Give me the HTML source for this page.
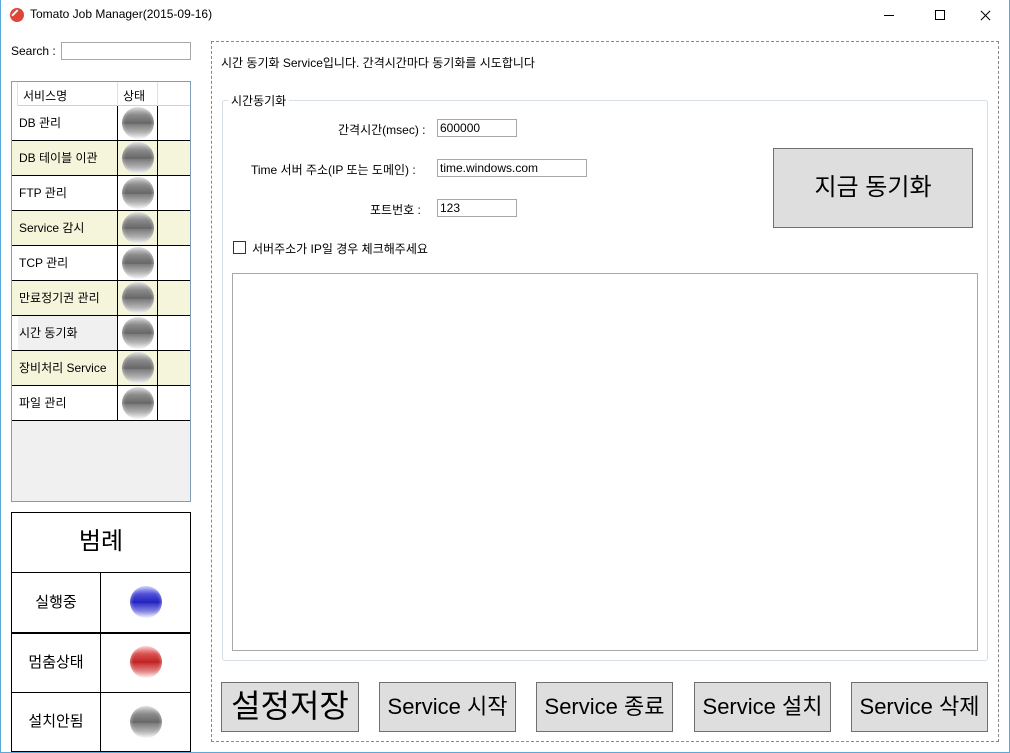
<!DOCTYPE html>
<html><head><meta charset="utf-8"><style>
*{box-sizing:border-box;margin:0;padding:0}
body{width:1010px;height:753px;background:#fff;font-family:"Liberation Sans","Noto Sans CJK KR",sans-serif;font-size:12px;color:#000;position:relative;overflow:hidden}
.abs{position:absolute}
.win{left:0;top:0;width:1010px;height:753px;border:1px solid #5aa9d8;border-top:none}
.ball{position:absolute;border-radius:50%;width:32px;height:32px}
.g{background:radial-gradient(circle at 50% 50%,rgba(255,255,255,0) 55%,rgba(255,255,255,.75) 100%),linear-gradient(#d8d8d8 0%,#8a8a8a 25%,#666 52%,#7a7a7a 53%,#b0b0b0 78%,#f4f4f4 100%)}
.b{background:radial-gradient(circle at 50% 50%,rgba(255,255,255,0) 55%,rgba(255,255,255,.75) 100%),linear-gradient(#c8c8ff 0%,#5050d8 25%,#2020c0 52%,#3030c8 53%,#8080e0 78%,#f0f0ff 100%)}
.r{background:radial-gradient(circle at 50% 50%,rgba(255,255,255,0) 55%,rgba(255,255,255,.75) 100%),linear-gradient(#ffc8c8 0%,#d85050 25%,#c02020 52%,#c83030 53%,#e08080 78%,#fff0f0 100%)}
.btn{position:absolute;background:#dedede;border:1px solid #707070;text-align:center;font-size:22px;line-height:47px;white-space:nowrap}
.inp{position:absolute;border:1px solid #a8a8a8;background:#fff;height:18px;padding-left:2px;line-height:16px;font-size:12px}
.row{position:absolute;left:12px;width:178px;height:35px;border-bottom:1px solid #000}
.row .n{position:absolute;left:6px;top:0;width:100px;height:34px;border-right:1px solid #000;line-height:34px;padding-left:1px}
.row .s{position:absolute;left:106px;top:0;width:40px;height:34px;border-right:1px solid #000}
.row .ball{left:4px;top:1px}
.leg{position:absolute;left:11px;width:180px;border:1px solid #000}
</style></head><body>
<div class="abs win"></div>
<div class="abs" style="left:10px;top:8px;width:14px;height:14px;border-radius:50%;background:#e0453a"></div>
<div class="abs" style="left:13px;top:11px;width:8px;height:8px;border-top:2px solid #fff;transform:rotate(-45deg)"></div>
<div class="abs" style="left:30px;top:7px;font-size:12px">Tomato Job Manager(2015-09-16)</div>
<div class="abs" style="left:884px;top:15px;width:10px;height:1px;background:#000"></div>
<div class="abs" style="left:935px;top:10px;width:10px;height:10px;border:1px solid #000"></div>
<div class="abs" style="left:979px;top:15px;width:13px;height:1px;background:#000;transform:rotate(45deg)"></div>
<div class="abs" style="left:979px;top:15px;width:13px;height:1px;background:#000;transform:rotate(-45deg)"></div>
<div class="abs" style="left:11px;top:44px">Search :</div>
<div class="inp" style="left:61px;top:42px;width:130px"></div>
<div class="abs" style="left:11px;top:81px;width:180px;height:421px;border:1px solid #7f9db9;background:#f0f0f0"></div>
<div class="abs" style="left:12px;top:82px;width:178px;height:24px;background:#fff;border-bottom:1px solid #d0d0d0"></div>
<div class="abs" style="left:12px;top:82px;width:6px;height:338px;background:#fff;border-right:1px solid #e0e0e0"></div>
<div class="abs" style="left:117px;top:82px;width:1px;height:24px;background:#e0e0e0"></div>
<div class="abs" style="left:157px;top:82px;width:1px;height:24px;background:#e0e0e0"></div>
<div class="abs" style="left:23px;top:87px">서비스명</div>
<div class="abs" style="left:123px;top:87px">상태</div>
<div class="row" style="top:106px;background:#fff"><div class="n">DB 관리</div><div class="s"><div class="ball g"></div></div></div>
<div class="row" style="top:141px;background:#f5f5dc"><div class="n">DB 테이블 이관</div><div class="s"><div class="ball g"></div></div></div>
<div class="row" style="top:176px;background:#fff"><div class="n">FTP 관리</div><div class="s"><div class="ball g"></div></div></div>
<div class="row" style="top:211px;background:#f5f5dc"><div class="n">Service 감시</div><div class="s"><div class="ball g"></div></div></div>
<div class="row" style="top:246px;background:#fff"><div class="n">TCP 관리</div><div class="s"><div class="ball g"></div></div></div>
<div class="row" style="top:281px;background:#f5f5dc"><div class="n">만료정기권 관리</div><div class="s"><div class="ball g"></div></div></div>
<div class="row" style="top:316px;background:#fff"><div class="n" style="background:#f0f0f0">시간 동기화</div><div class="s"><div class="ball g"></div></div></div>
<div class="row" style="top:351px;background:#f5f5dc"><div class="n">장비처리 Service</div><div class="s"><div class="ball g"></div></div></div>
<div class="row" style="top:386px;background:#fff"><div class="n">파일 관리</div><div class="s"><div class="ball g"></div></div></div>
<div class="abs" style="left:12px;top:421px;width:178px;height:80px;background:#f0f0f0"></div>
<div class="leg" style="top:512px;height:61px;text-align:center;font-size:24px;line-height:58px">범례</div>
<div class="leg" style="top:572px;height:61px"><div class="abs" style="left:0;top:0;width:89px;height:59px;border-right:1px solid #000;text-align:center;line-height:59px;font-size:15px">실행중</div><div class="ball b" style="left:118px;top:13px"></div></div>
<div class="leg" style="top:632px;height:61px;border-top-width:2px"><div class="abs" style="left:0;top:0;width:89px;height:58px;border-right:1px solid #000;text-align:center;line-height:58px;font-size:15px">멈춤상태</div><div class="ball r" style="left:118px;top:12px"></div></div>
<div class="leg" style="top:692px;height:60px"><div class="abs" style="left:0;top:0;width:89px;height:58px;border-right:1px solid #000;text-align:center;line-height:58px;font-size:15px">설치안됨</div><div class="ball g" style="left:118px;top:13px"></div></div>
<div class="abs" style="left:211px;top:41px;width:788px;height:701px;border:1px dashed #888"></div>
<div class="abs" style="left:221px;top:54px">시간 동기화 Service입니다. 간격시간마다 동기화를 시도합니다</div>
<div class="abs" style="left:222px;top:100px;width:766px;height:561px;border:1px solid #d5dfe5;border-radius:3px"></div>
<div class="abs" style="left:228px;top:92px;background:#fff;padding:0 3px">시간동기화</div>
<div class="abs" style="left:338px;top:121px">간격시간(msec) :</div>
<div class="inp" style="left:437px;top:119px;width:80px">600000</div>
<div class="abs" style="left:251px;top:161px">Time 서버 주소(IP 또는 도메인) :</div>
<div class="inp" style="left:437px;top:159px;width:150px">time.windows.com</div>
<div class="abs" style="left:370px;top:201px">포트번호 :</div>
<div class="inp" style="left:437px;top:199px;width:80px">123</div>
<div class="abs" style="left:233px;top:241px;width:13px;height:13px;border:1px solid #333"></div>
<div class="abs" style="left:252px;top:240px">서버주소가 IP일 경우 체크해주세요</div>
<div class="btn" style="left:773px;top:148px;width:200px;height:80px;line-height:78px;font-size:24px">지금 동기화</div>
<div class="abs" style="left:232px;top:273px;width:746px;height:378px;border:1px solid #a8a8a8"></div>
<div class="btn" style="left:221px;top:682px;width:138px;height:50px;font-size:32px">설정저장</div>
<div class="btn" style="left:379px;top:682px;width:137px;height:50px">Service 시작</div>
<div class="btn" style="left:536px;top:682px;width:137px;height:50px">Service 종료</div>
<div class="btn" style="left:694px;top:682px;width:137px;height:50px">Service 설치</div>
<div class="btn" style="left:851px;top:682px;width:137px;height:50px">Service 삭제</div>
</body></html>
